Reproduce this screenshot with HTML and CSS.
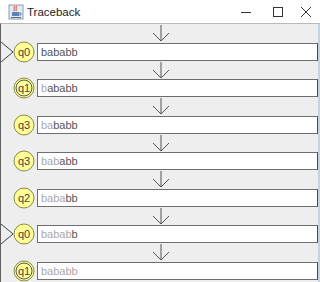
FILE: index.html
```html
<!DOCTYPE html>
<html lang="en">
<head>
  <meta charset="UTF-8" />
  <title>Traceback</title>
  <link rel="stylesheet" href="styles.css">
</head>
<body>
  <div class="window">
    <div class="titlebar">
      <svg class="app-icon" width="16" height="16" viewBox="0 0 16 16">
        <rect x="1" y="1" width="14" height="14" fill="#e4ebf3" stroke="#8a9bb2"/>
        <path d="M4 12 h7 v-4 h-7 z" fill="#5b83b4"/>
        <path d="M11 9 h2 v2 h-2" fill="none" stroke="#5b83b4"/>
        <path d="M6 7 c1-2 -1-3 1-5 M8 7 c1-2 -1-3 1-5" fill="none" stroke="#d2452b" stroke-width="1"/>
        <rect x="3" y="13" width="10" height="1" fill="#6a6a6a"/>
      </svg>
      <span class="title">Traceback</span>
      <div class="controls">
        <svg class="ctl-min" width="12" height="12" viewBox="0 0 12 12"><path d="M1 6.5 h10" stroke="#333" stroke-width="1"/></svg>
        <svg class="ctl-max" width="12" height="12" viewBox="0 0 12 12"><rect x="1.5" y="1.5" width="9" height="9" fill="none" stroke="#333"/></svg>
        <svg class="ctl-close" width="12" height="12" viewBox="0 0 12 12"><path d="M1 1 L11 11 M11 1 L1 11" stroke="#333" stroke-width="1"/></svg>
      </div>
    </div>

    <div class="trace">
      <div class="step">
        <div class="arrow"><svg width="18" height="18" viewBox="0 0 18 18"><path d="M9 1 V17 M1 9 L9 17 L17 9" fill="none" stroke="#555"/></svg></div>
        <div class="config">
          <svg class="state" width="37" height="22" viewBox="0 0 37 22">
            <path d="M1 1 L13 11 L1 21" fill="none" stroke="#2f4656"/>
            <circle cx="24" cy="11" r="10" fill="#ffff96" stroke="#8a8a50"/>
            <text x="24" y="15" text-anchor="middle">q0</text>
          </svg>
          <div class="tape">bababb</div>
        </div>
      </div>

      <div class="step">
        <div class="arrow"><svg width="18" height="18" viewBox="0 0 18 18"><path d="M9 1 V17 M1 9 L9 17 L17 9" fill="none" stroke="#555"/></svg></div>
        <div class="config">
          <svg class="state" width="37" height="22" viewBox="0 0 37 22">
            <circle cx="24" cy="11" r="10" fill="#ffff96" stroke="#8a8a50"/>
            <circle cx="24" cy="11" r="8" fill="none" stroke="#555"/>
            <text x="24" y="15" text-anchor="middle">q1</text>
          </svg>
          <div class="tape"><span class="done">b</span>ababb</div>
        </div>
      </div>

      <div class="step">
        <div class="arrow"><svg width="18" height="18" viewBox="0 0 18 18"><path d="M9 1 V17 M1 9 L9 17 L17 9" fill="none" stroke="#555"/></svg></div>
        <div class="config">
          <svg class="state" width="37" height="22" viewBox="0 0 37 22">
            <circle cx="24" cy="11" r="10" fill="#ffff96" stroke="#8a8a50"/>
            <text x="24" y="15" text-anchor="middle">q3</text>
          </svg>
          <div class="tape"><span class="done">ba</span>babb</div>
        </div>
      </div>

      <div class="step">
        <div class="arrow"><svg width="18" height="18" viewBox="0 0 18 18"><path d="M9 1 V17 M1 9 L9 17 L17 9" fill="none" stroke="#555"/></svg></div>
        <div class="config">
          <svg class="state" width="37" height="22" viewBox="0 0 37 22">
            <circle cx="24" cy="11" r="10" fill="#ffff96" stroke="#8a8a50"/>
            <text x="24" y="15" text-anchor="middle">q3</text>
          </svg>
          <div class="tape"><span class="done">bab</span>abb</div>
        </div>
      </div>

      <div class="step">
        <div class="arrow"><svg width="18" height="18" viewBox="0 0 18 18"><path d="M9 1 V17 M1 9 L9 17 L17 9" fill="none" stroke="#555"/></svg></div>
        <div class="config">
          <svg class="state" width="37" height="22" viewBox="0 0 37 22">
            <circle cx="24" cy="11" r="10" fill="#ffff96" stroke="#8a8a50"/>
            <text x="24" y="15" text-anchor="middle">q2</text>
          </svg>
          <div class="tape"><span class="done">baba</span>bb</div>
        </div>
      </div>

      <div class="step">
        <div class="arrow"><svg width="18" height="18" viewBox="0 0 18 18"><path d="M9 1 V17 M1 9 L9 17 L17 9" fill="none" stroke="#555"/></svg></div>
        <div class="config">
          <svg class="state" width="37" height="22" viewBox="0 0 37 22">
            <path d="M1 1 L13 11 L1 21" fill="none" stroke="#2f4656"/>
            <circle cx="24" cy="11" r="10" fill="#ffff96" stroke="#8a8a50"/>
            <text x="24" y="15" text-anchor="middle">q0</text>
          </svg>
          <div class="tape"><span class="done">babab</span>b</div>
        </div>
      </div>

      <div class="step">
        <div class="arrow"><svg width="18" height="18" viewBox="0 0 18 18"><path d="M9 1 V17 M1 9 L9 17 L17 9" fill="none" stroke="#555"/></svg></div>
        <div class="config">
          <svg class="state" width="37" height="22" viewBox="0 0 37 22">
            <circle cx="24" cy="11" r="10" fill="#ffff96" stroke="#8a8a50"/>
            <circle cx="24" cy="11" r="8" fill="none" stroke="#555"/>
            <text x="24" y="15" text-anchor="middle">q1</text>
          </svg>
          <div class="tape"><span class="done">bababb</span></div>
        </div>
      </div>
    </div>
  </div>
</body>
</html>
```

FILE: styles.css
```css
html, body {
  margin: 0;
  padding: 0;
  overflow: hidden;
}

body {
  font-family: "Liberation Sans", Arial, sans-serif;
  background: #ffffff;
}

.window {
  width: 320px;
  height: 282px;
  overflow: hidden;
  background: #ffffff;
}

.titlebar {
  height: 23px;
  display: flex;
  align-items: center;
  padding-left: 8px;
  background: #ffffff;
}

.app-icon {
  margin-right: 3px;
}

.title {
  font-family: "Liberation Sans", Arial, sans-serif;
  font-size: 11.5px;
  color: #222;
}

.controls {
  margin-left: auto;
  display: flex;
  padding-right: 8px;
}

.ctl-max {
  margin-left: 20px;
}

.ctl-close {
  margin-left: 16px;
}

.trace {
  height: 259px;
  background: #eeeeee;
  border-left: 1px solid #606060;
  border-top: 1px solid #b8b8b8;
  box-sizing: border-box;
  padding-right: 2px;
  box-shadow: inset -2px 0 0 #c6d3de;
}

.step {
  display: flex;
  flex-direction: column;
}

.arrow {
  height: 18.5px;
  display: flex;
  justify-content: center;
  align-items: center;
  padding-left: 2px;
}

.config {
  display: flex;
  height: 18px;
  align-items: center;
}

.state {
  flex: none;
  margin: -2px 0 -2px -1px;
}

.state text {
  font-family: "Liberation Sans", Arial, sans-serif;
  font-size: 11px;
  fill: #444;
}

.tape {
  flex: 1;
  height: 18px;
  box-sizing: border-box;
  background: #ffffff;
  border: 1px solid #6e6e6e;
  border-right-color: #4a4a4a;
  padding-left: 3px;
  font-size: 11px;
  line-height: 16px;
  color: #555;
}

.done {
  color: #a8a8a8;
}
```
